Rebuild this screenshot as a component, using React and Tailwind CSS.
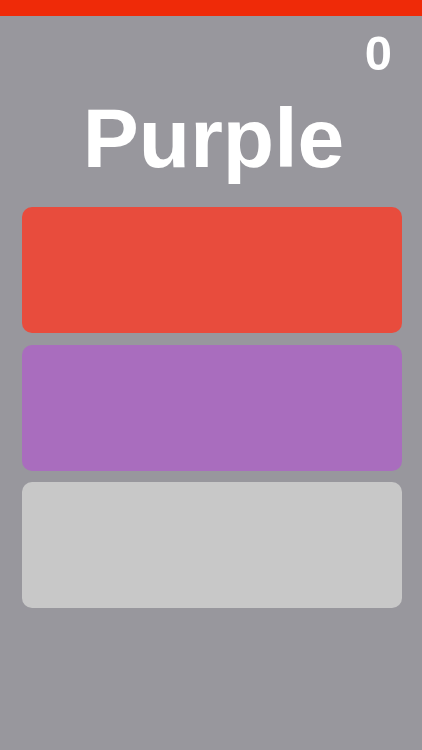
const choices = [
  { name: 'red', color: 'bg-[#e84c3d]' },
  { name: 'purple', color: 'bg-[#a96dbe]' },
  { name: 'grey', color: 'bg-[#c8c8c8]' },
];

export default function App() {
  return (
    <div className="min-h-[750px] bg-[#98979d] font-['Liberation_Sans',Arial,sans-serif] text-white">
      {/* time remaining */}
      <div className="h-4 bg-[#ef2a08]" />

      <div className="flex justify-end pr-[30px] pt-[13px]">
        <span className="text-[49px] font-bold leading-none">0</span>
      </div>

      <h1 className="mt-[18px] pl-[5px] text-center text-[84px] font-bold leading-none">Purple</h1>

      <div className="mt-[27px] flex flex-col gap-[11.5px] pl-[22px] pr-[20px]">
        {choices.map((c) => (
          <button key={c.name} className={`h-[126px] w-full rounded-[10px] ${c.color}`} />
        ))}
      </div>
    </div>
  );
}
